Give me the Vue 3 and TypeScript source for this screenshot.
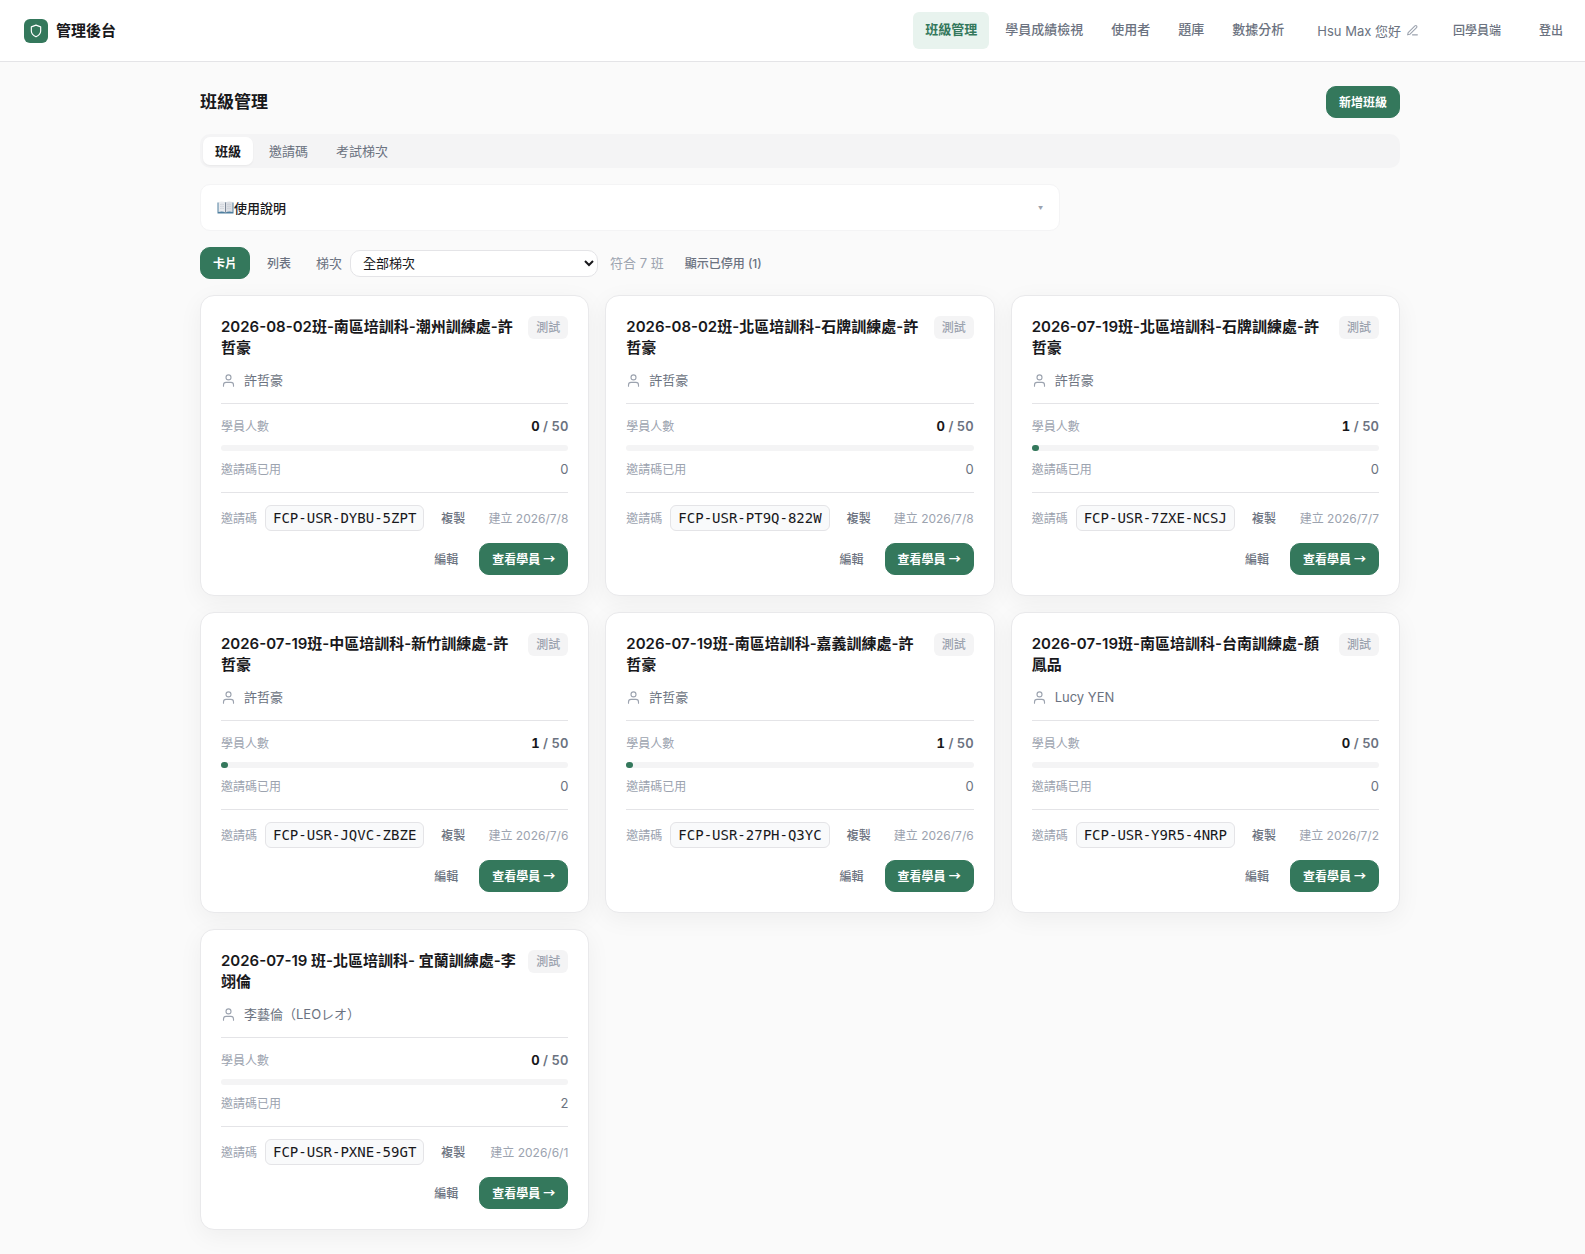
<script setup lang="ts">
import { ref } from 'vue'

interface ClassItem {
  title: string
  owner: string
  count: number
  used: number
  code: string
  created: string
}

const capacity = 50
const nav = ['班級管理', '學員成績檢視', '使用者', '題庫', '數據分析']
const tabs = ['班級', '邀請碼', '考試梯次']
const activeTab = ref('班級')
const batch = ref('all')

const classes: ClassItem[] = [
  { title: '2026-08-02班-南區培訓科-潮州訓練處-許哲豪', owner: '許哲豪', count: 0, used: 0, code: 'FCP-USR-DYBU-5ZPT', created: '2026/7/8' },
  { title: '2026-08-02班-北區培訓科-石牌訓練處-許哲豪', owner: '許哲豪', count: 0, used: 0, code: 'FCP-USR-PT9Q-822W', created: '2026/7/8' },
  { title: '2026-07-19班-北區培訓科-石牌訓練處-許哲豪', owner: '許哲豪', count: 1, used: 0, code: 'FCP-USR-7ZXE-NCSJ', created: '2026/7/7' },
  { title: '2026-07-19班-中區培訓科-新竹訓練處-許哲豪', owner: '許哲豪', count: 1, used: 0, code: 'FCP-USR-JQVC-ZBZE', created: '2026/7/6' },
  { title: '2026-07-19班-南區培訓科-嘉義訓練處-許哲豪', owner: '許哲豪', count: 1, used: 0, code: 'FCP-USR-27PH-Q3YC', created: '2026/7/6' },
  { title: '2026-07-19班-南區培訓科-台南訓練處-顏鳳品', owner: 'Lucy YEN', count: 0, used: 0, code: 'FCP-USR-Y9R5-4NRP', created: '2026/7/2' },
  { title: '2026-07-19 班-北區培訓科- 宜蘭訓練處-李翊倫', owner: '李藝倫（LEOレオ）', count: 0, used: 2, code: 'FCP-USR-PXNE-59GT', created: '2026/6/1' },
]
</script>

<template>
  <div class="app" lang="zh-Hant">
    <header class="topbar">
      <div class="brand">
        <span class="logo">
          <svg width="14" height="14" viewBox="0 0 24 24" fill="none" stroke="currentColor" stroke-width="2" stroke-linecap="round" stroke-linejoin="round" aria-hidden="true">
            <path d="M12 22s8-4 8-10V5l-8-3-8 3v7c0 6 8 10 8 10z" />
          </svg>
        </span>
        <span class="brand-name">管理後台</span>
      </div>
      <div class="top-right">
        <nav class="nav">
          <a v-for="(item, i) in nav" :key="item" href="#" :class="{ active: i === 0 }">{{ item }}</a>
        </nav>
        <button type="button" class="profile">
          <span>Hsu Max 您好</span>
          <svg width="13" height="13" viewBox="0 0 24 24" fill="none" stroke="currentColor" stroke-width="2" stroke-linecap="round" stroke-linejoin="round" aria-hidden="true">
            <path d="M12 20h9" />
            <path d="M16.5 3.5a2.121 2.121 0 0 1 3 3L7 19l-4 1 1-4L16.5 3.5z" />
          </svg>
        </button>
        <button type="button" class="btn ghost">回學員端</button>
        <button type="button" class="btn ghost">登出</button>
      </div>
    </header>

    <main class="content">
      <div class="page-head">
        <h1>班級管理</h1>
        <button type="button" class="btn primary">新增班級</button>
      </div>

      <div class="tabs" role="tablist">
        <button
          v-for="tab in tabs"
          :key="tab"
          type="button"
          role="tab"
          :aria-selected="tab === activeTab"
          :class="{ active: tab === activeTab }"
          @click="activeTab = tab"
        >{{ tab }}</button>
      </div>

      <button type="button" class="help" aria-expanded="false">
        <span class="help-title">
          <svg width="17" height="13" viewBox="0 0 17 13" aria-hidden="true">
            <path d="M0.5 1.5h16v11h-16z" fill="#4f7f9f" />
            <path d="M1.5 1Q5.5 0 8.500 1.5V11.5Q5.5 10 1.5 11z" fill="#e9ebef" />
            <path d="M15.5 1Q11.5 0 8.500 1.5V11.5Q11.5 10 15.5 11z" fill="#dcdfe5" />
            <path d="M8.5 1.5v10" stroke="#7f8998" stroke-width="1" />
            <path d="M3 3.5q2-.6 4 0M3 5.5q2-.6 4 0M3 7.5q2-.6 4 0M10 3.5q2-.6 4 0M10 5.5q2-.6 4 0M10 7.5q2-.6 4 0" fill="none" stroke="#c3c8d0" stroke-width=".6" />
          </svg>
          <span>使用說明</span>
        </span>
        <span class="caret">▼</span>
      </button>

      <div class="filters">
        <div class="views">
          <button type="button" class="btn primary">卡片</button>
          <button type="button" class="btn ghost">列表</button>
        </div>
        <div class="batch">
          <label for="batch">梯次</label>
          <select id="batch" v-model="batch">
            <option value="all">全部梯次</option>
          </select>
        </div>
        <div class="result">
          <span>符合 7 班</span>
          <button type="button" class="btn ghost">顯示已停用 (1)</button>
        </div>
      </div>

      <div class="grid">
        <article v-for="item in classes" :key="item.code" class="card">
          <div class="card-head">
            <h2>{{ item.title }}</h2>
            <span class="badge">測試</span>
          </div>
          <div class="owner">
            <svg width="15" height="15" viewBox="0 0 24 24" fill="none" stroke="currentColor" stroke-width="1.8" stroke-linecap="round" stroke-linejoin="round" aria-hidden="true">
              <path d="M20 21v-2a4 4 0 0 0-4-4H8a4 4 0 0 0-4 4v2" />
              <circle cx="12" cy="7" r="4" />
            </svg>
            <span>{{ item.owner }}</span>
          </div>
          <div class="stats">
            <div class="stat">
              <span class="label">學員人數</span>
              <span class="count"><b>{{ item.count }}</b> / {{ capacity }}</span>
            </div>
            <div class="bar"><div class="fill" :style="{ width: (item.count / capacity) * 100 + '%' }"></div></div>
            <div class="stat">
              <span class="label">邀請碼已用</span>
              <span class="used">{{ item.used }}</span>
            </div>
          </div>
          <div class="invite">
            <span class="label">邀請碼</span>
            <code>{{ item.code }}</code>
            <button type="button" class="btn ghost copy">複製</button>
            <span class="label created">建立 {{ item.created }}</span>
          </div>
          <div class="actions">
            <button type="button" class="btn ghost">編輯</button>
            <button type="button" class="btn primary">查看學員 <span class="arrow">→</span></button>
          </div>
        </article>
      </div>
    </main>
  </div>
</template>

<style>
body {
  margin: 0;
  background: #fafafa;
}
</style>

<style scoped>
.app {
  font-family: Inter, 'Noto Sans CJK TC', sans-serif;
  font-size: 13px;
  line-height: 21px;
  color: #18181b;
}
.app * {
  box-sizing: border-box;
}
button,
select {
  font-family: inherit;
  font-size: 13px;
  color: inherit;
  cursor: pointer;
}
h1,
h2 {
  margin: 0;
}
.topbar {
  display: flex;
  align-items: center;
  justify-content: space-between;
  padding: 12px 9px 12px 24px;
  background: #fff;
  border-bottom: 1px solid #e4e4e7;
}
.brand {
  display: flex;
  align-items: center;
  gap: 8px;
  font-size: 15px;
  font-weight: 600;
}
.brand-name {
  padding-bottom: 1px;
}
.logo {
  display: flex;
  align-items: center;
  justify-content: center;
  width: 24px;
  height: 24px;
  border-radius: 6px;
  background: #34785c;
  color: #fff;
}
.top-right {
  display: flex;
  align-items: center;
  gap: 12px;
}
.nav {
  display: flex;
  gap: 4px;
}
.nav a {
  padding: 7px 12px 9px;
  border-radius: 6px;
  font-weight: 500;
  color: #6b7280;
  text-decoration: none;
}
.nav a.active {
  background: #e8f3ee;
  color: #34785c;
  font-weight: 600;
}
.profile {
  display: flex;
  align-items: center;
  gap: 5px;
  padding: 4px 9px;
  border: 0;
  background: none;
  color: #6b7280;
}
.profile svg {
  color: #9ca3af;
}
.btn {
  height: 32px;
  padding: 0 12px 2px;
  border: 1px solid transparent;
  border-radius: 10px;
  font-size: 12px;
  font-weight: 500;
  white-space: nowrap;
}
.primary {
  background: #34785c;
  border-color: #34785c;
  color: #fff;
  font-weight: 600;
}
.ghost {
  background: none;
  color: #6b7280;
}
.content {
  display: flex;
  flex-direction: column;
  gap: 16px;
  box-sizing: border-box;
  max-width: 1215px;
  margin: 0 auto;
  padding: 24px 0 24px 15px;
}
.page-head {
  display: flex;
  align-items: center;
  justify-content: space-between;
}
h1 {
  font-size: 17px;
  font-weight: 600;
  line-height: 24px;
}
.tabs {
  display: flex;
  gap: 4px;
  padding: 3px;
  border-radius: 10px;
  background: #f4f4f5;
}
.tabs button {
  height: 28px;
  padding: 0 12px 2px;
  border: 0;
  border-radius: 7px;
  background: none;
  color: #6b7280;
}
.tabs button.active {
  background: #fff;
  color: #18181b;
  font-weight: 600;
  box-shadow: 0 1px 2px rgba(0, 0, 0, 0.05);
}
.help {
  display: flex;
  align-items: center;
  justify-content: space-between;
  width: 100%;
  max-width: 860px;
  height: 47px;
  padding: 0 16px;
  border: 1px solid #f4f4f5;
  border-radius: 10px;
  background: #fff;
  font-weight: 500;
}
.help-title {
  display: flex;
  align-items: center;
}
.caret {
  font-size: 5px;
  color: #9ca3af;
}
.filters {
  display: flex;
  align-items: center;
  gap: 12px;
}
.views {
  display: flex;
  gap: 4px;
}
.batch {
  display: flex;
  align-items: center;
  gap: 8px;
  color: #6b7280;
}
.batch select {
  width: 248px;
  height: 27px;
  padding: 0 8px;
  border: 1px solid #e4e4e7;
  border-radius: 10px;
  background: #fff;
  color: #18181b;
}
.result {
  display: flex;
  align-items: center;
  gap: 8px;
  color: #9ca3af;
}
.grid {
  display: grid;
  grid-template-columns: repeat(3, minmax(0, 1fr));
  gap: 16px;
}
.card {
  padding: 20px;
  border: 1px solid #e9e9eb;
  border-radius: 14px;
  background: #fff;
  box-shadow: 0 6px 24px rgba(0, 0, 0, 0.05);
}
.card-head {
  display: flex;
  align-items: flex-start;
  justify-content: space-between;
  gap: 8px;
}
h2 {
  flex: 1;
  font-size: 15px;
  font-weight: 600;
  line-height: 21px;
}
.badge {
  padding: 1px 8px;
  border-radius: 6px;
  background: #f4f4f5;
  font-size: 12px;
  font-weight: 500;
  color: #9ca3af;
}
.owner {
  display: flex;
  align-items: center;
  gap: 8px;
  margin: 12px 0;
  color: #6b7280;
}
.owner svg {
  color: #9ca3af;
}
.stats {
  display: flex;
  flex-direction: column;
  gap: 8px;
  padding: 12px 0;
  border: solid #e4e4e7;
  border-width: 1px 0;
}
.stat {
  display: flex;
  align-items: center;
  justify-content: space-between;
}
.label {
  font-size: 12px;
  color: #9ca3af;
}
.count {
  font-weight: 600;
  font-variant-numeric: tabular-nums;
  color: #6b7280;
}
.count b {
  font-weight: 700;
  color: #18181b;
}
.used {
  color: #6b7280;
}
.bar {
  height: 6px;
  border-radius: 3px;
  background: #f4f4f5;
}
.fill {
  height: 6px;
  border-radius: 3px;
  background: #34785c;
}
.invite {
  display: flex;
  align-items: center;
  margin: 12px 0;
}
code {
  margin-left: 8px;
  padding: 3px 7px;
  line-height: 18px;
  border: 1px solid #e4e4e7;
  border-radius: 6px;
  background: #f9fafb;
  font-family: 'DejaVu Sans Mono', monospace;
  font-size: 14px;
}
.copy {
  height: 26px;
  margin-left: 4px;
}
.created {
  margin-left: auto;
}
.actions {
  display: flex;
  justify-content: flex-end;
  gap: 8px;
}
.arrow {
  font-family: 'Noto Sans CJK TC', sans-serif;
  line-height: 12px;
}
</style>
